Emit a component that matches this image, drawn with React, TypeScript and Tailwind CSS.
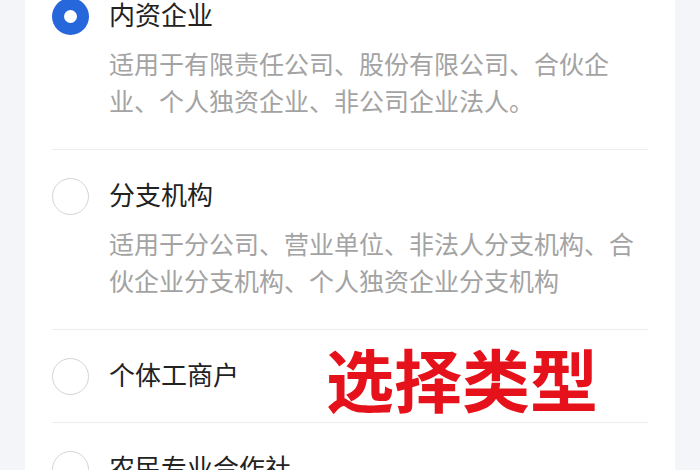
const font = { fontFamily: '"Noto Sans CJK SC", "Noto Sans", sans-serif' };

interface Option {
  title: string;
  lines: string[];
  checked?: boolean;
}

const options: Option[] = [
  {
    title: "内资企业",
    lines: ["适用于有限责任公司、股份有限公司、合伙企", "业、个人独资企业、非公司企业法人。"],
    checked: true,
  },
  {
    title: "分支机构",
    lines: ["适用于分公司、营业单位、非法人分支机构、合", "伙企业分支机构、个人独资企业分支机构"],
  },
  { title: "个体工商户", lines: [] },
  { title: "农民专业合作社", lines: [] },
];

function Radio({ checked }: { checked?: boolean }) {
  if (checked) {
    return (
      <div className="mt-[2px] -mb-[3px] w-[37px] h-[37px] rounded-full bg-[#2767dc] flex items-center justify-center shrink-0">
        <div className="w-[13px] h-[13px] rounded-full bg-white" />
      </div>
    );
  }
  return (
    <div className="mt-[2px] -mb-[3px] w-[37px] h-[37px] rounded-full border-[1.5px] border-[#d4d4d4] shrink-0" />
  );
}

export default function App() {
  return (
    <div className="w-[700px] h-[470px] overflow-hidden bg-[#f3f5f9] relative" style={font}>
      <div className="mx-[25px] bg-white h-full flex flex-col">
        <div className="-mt-[30px] px-[27px]">
          {options.map((opt, i) => (
            <div
              key={opt.title}
              className={`flex gap-[20px] pt-[26px] pb-[30px] ${
                i < options.length - 1 ? "border-b border-[#ececec]" : ""
              }`}
            >
              <Radio checked={opt.checked} />
              <div className="flex-1">
                <div className="text-[26px] leading-[36px] text-[#222222]">{opt.title}</div>
                {opt.lines.length > 0 && (
                  <div className="mt-[13px] text-[25px] leading-[37px] text-[#a3a3a3] whitespace-nowrap">
                    {opt.lines.map((line) => (
                      <div key={line}>{line}</div>
                    ))}
                  </div>
                )}
              </div>
            </div>
          ))}
        </div>
      </div>

      {/* red caption over the list */}
      <div className="absolute left-[312px] top-[334px] w-[300px] h-[88px] bg-white/80 flex items-center justify-center">
        <span className="text-[68px] leading-none font-bold text-[#e5121b]">选择类型</span>
      </div>
    </div>
  );
}
